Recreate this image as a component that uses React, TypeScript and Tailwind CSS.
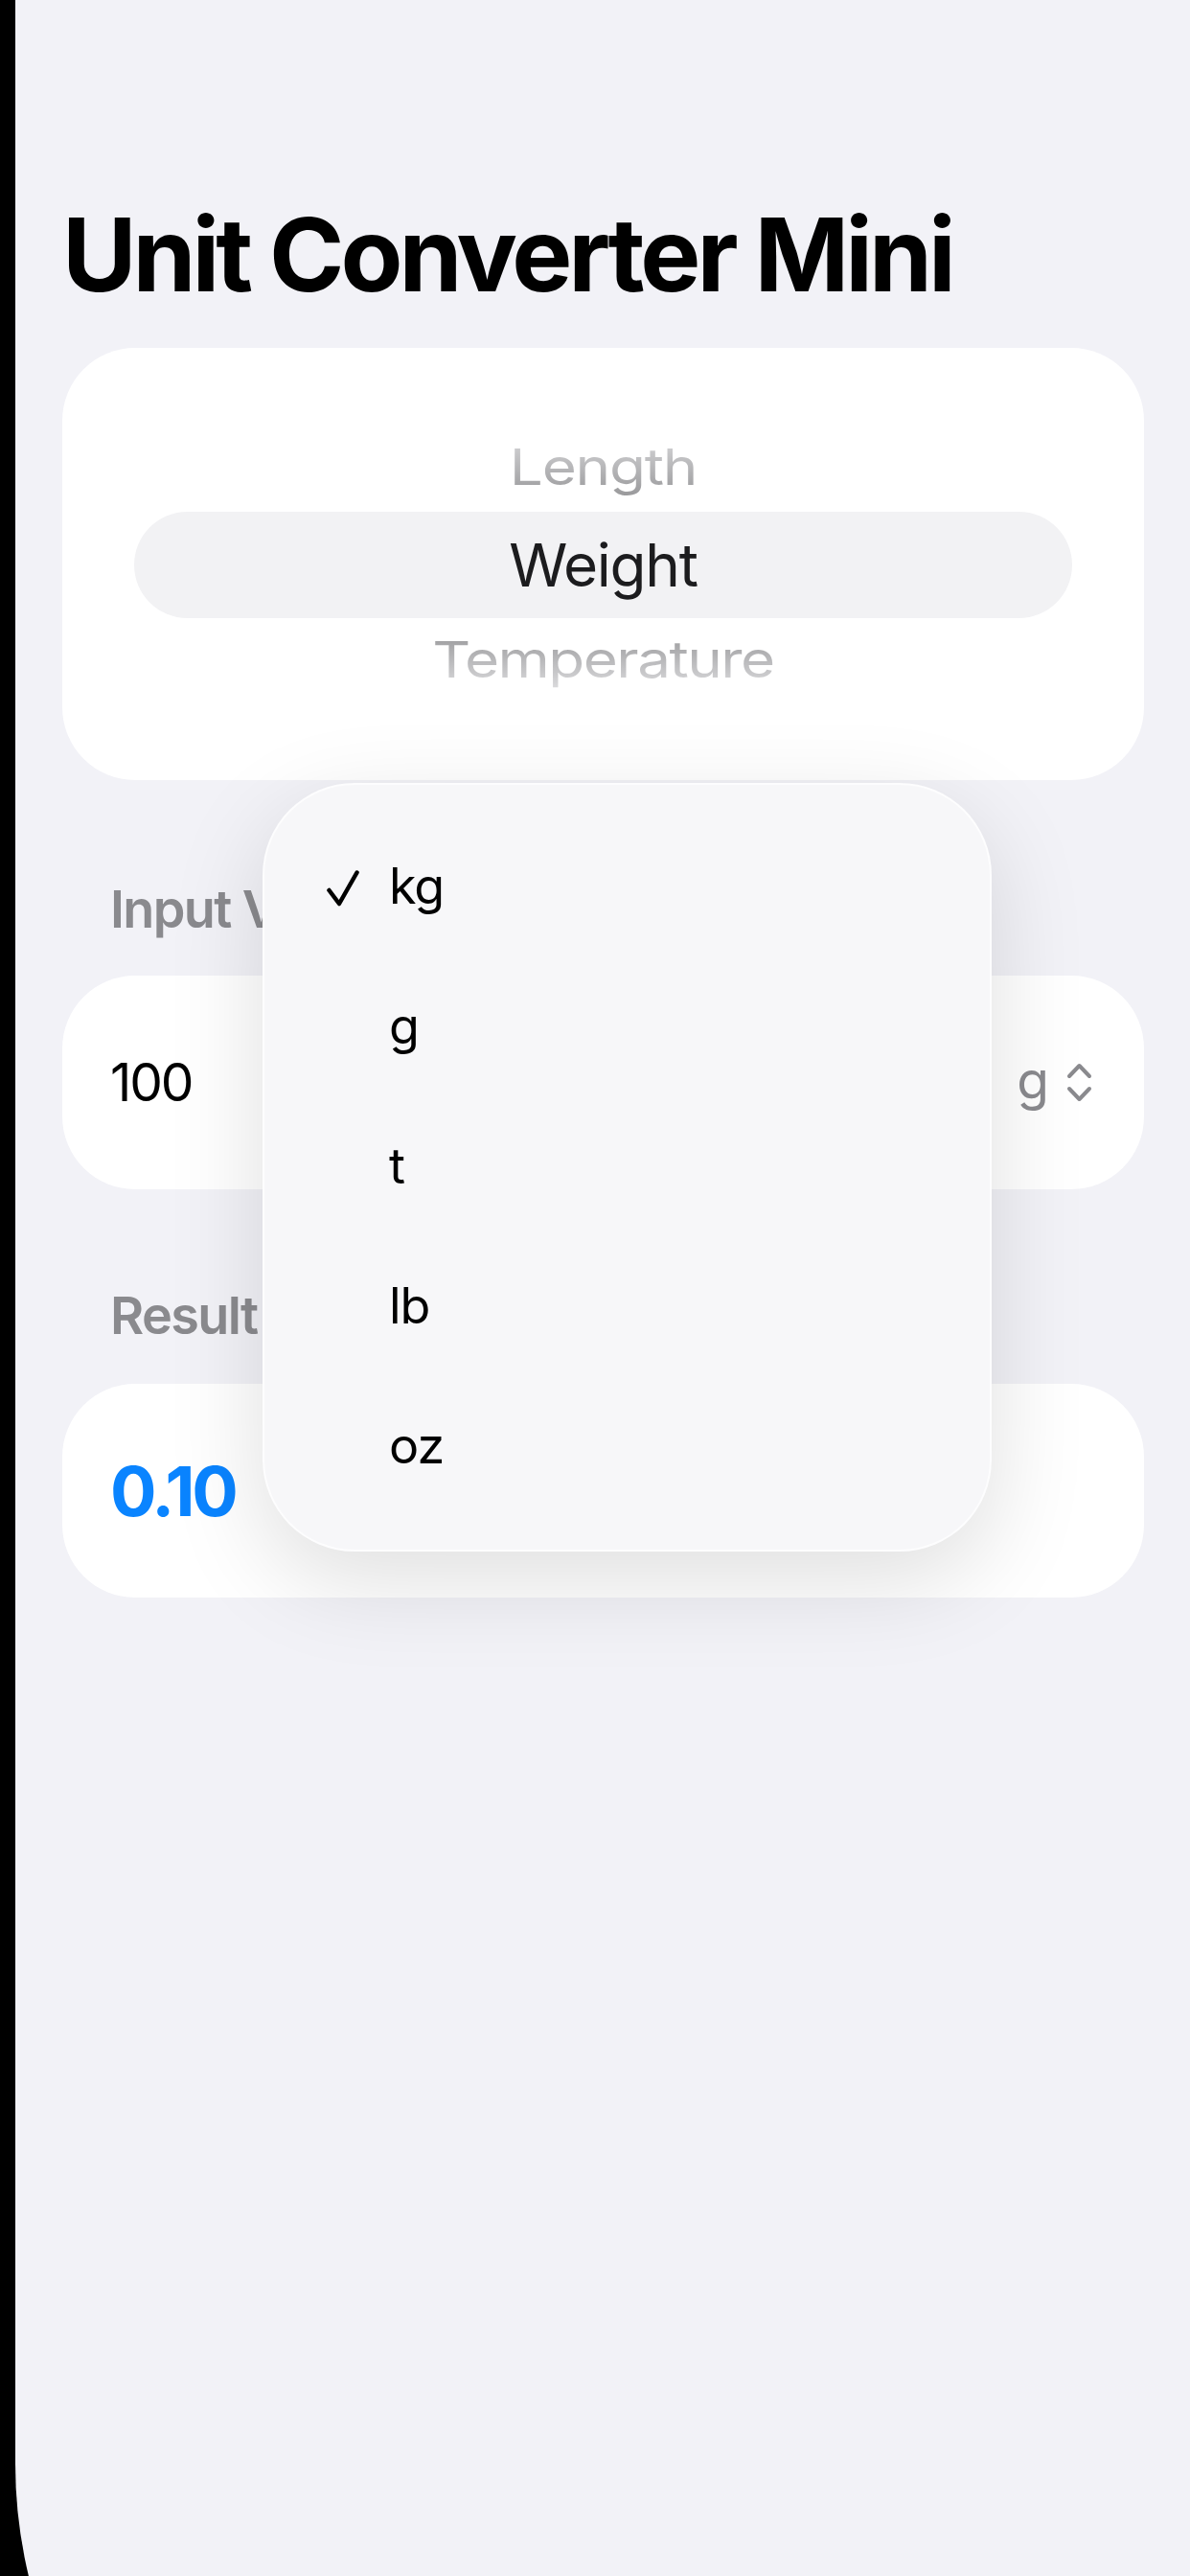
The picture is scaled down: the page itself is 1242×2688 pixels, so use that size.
import React from "react";

function Chevrons() {
  return (
    <svg width="27" height="43" viewBox="0 0 27 43" fill="none">
      <path d="M3 15 L13.5 4 L24 15" stroke="#8a8a8e" strokeWidth="4" strokeLinecap="round" strokeLinejoin="round" />
      <path d="M3 28 L13.5 39 L24 28" stroke="#8a8a8e" strokeWidth="4" strokeLinecap="round" strokeLinejoin="round" />
    </svg>
  );
}

function Check() {
  return (
    <svg width="34" height="38" viewBox="0 0 34 38" fill="none">
      <path d="M2.5 21 L13 35 L31.5 2.5" stroke="#000" strokeWidth="4.5" strokeLinecap="round" strokeLinejoin="round" />
    </svg>
  );
}

const units = ["kg", "g", "t", "lb", "oz"];

export default function App() {
  return (
    <div className="w-[1242px] h-[2688px] bg-black overflow-hidden font-['Inter',sans-serif]">
      <div className="relative ml-[16px] h-[3071px] rounded-bl-[500px] bg-[#f2f2f7] pl-[49px] pr-[48px] pt-[213px]">
        <h1 className="text-[106px] leading-none font-bold text-black tracking-[-0.038em] whitespace-nowrap">
          Unit Converter Mini
        </h1>

        {/* Picker card */}
        <div className="mt-[44px] h-[451px] rounded-[76px] bg-white pt-[83px] flex flex-col">
          <div className="h-[88px] flex items-center justify-center">
            <span className="text-[62px] leading-none tracking-[-0.02em] scale-y-[0.85] bg-linear-to-b from-[#d2d2d4] to-[#98989a] bg-clip-text text-transparent pb-[6px]">
              Length
            </span>
          </div>
          <div className="mx-[75px] h-[111px] rounded-full bg-[#f2f2f4] flex items-center justify-center">
            <span className="text-[62px] leading-none tracking-[-0.02em] text-[#1c1c1e]">Weight</span>
          </div>
          <div className="h-[92px] flex items-center justify-center">
            <span className="text-[62px] leading-none tracking-[-0.025em] scale-y-[0.85] bg-linear-to-b from-[#9c9c9e] to-[#dcdcde] bg-clip-text text-transparent pb-[6px]">
              Temperature
            </span>
          </div>
        </div>

        {/* Input */}
        <div className="mt-[108px] pl-[50px] text-[54px] leading-none font-semibold text-[#8a8a8e] tracking-[-0.03em]">
          Input Value
        </div>
        <div className="mt-[42px] h-[223px] rounded-[76px] bg-white pl-[50px] pr-[54px] flex items-center justify-between">
          <span className="text-[55px] leading-none text-black tracking-[-0.04em]">100</span>
          <div className="flex items-center gap-[18px]">
            <span className="text-[55px] leading-none text-[#8a8a8e] pb-[4px]">g</span>
            <Chevrons />
          </div>
        </div>

        {/* Result */}
        <div className="mt-[105px] pl-[50px] text-[54px] leading-none font-semibold text-[#8a8a8e] tracking-[-0.03em]">
          Result
        </div>
        <div className="mt-[44px] h-[223px] rounded-[76px] bg-white pl-[50px] flex items-center">
          <span className="text-[72px] leading-none font-bold text-[#0a84ff] tracking-[-0.045em]">0.10</span>
        </div>

        {/* Dropdown menu */}
        <div className="absolute left-[258px] top-[817px] w-[761px] h-[802px] rounded-[96px] bg-[#f7f7f9] border-2 border-white/80 shadow-[0_30px_100px_rgba(0,0,0,0.13)] pt-[35px] flex flex-col">
          {units.map((u, i) => (
            <div key={u} className="h-[146px] flex items-center pl-[65px]">
              <div className="w-[34px] flex items-center">{i === 0 && <Check />}</div>
              <span className="ml-[31px] text-[52px] leading-none text-black tracking-[-0.02em] pb-[4px]">{u}</span>
            </div>
          ))}
        </div>
      </div>
    </div>
  );
}
